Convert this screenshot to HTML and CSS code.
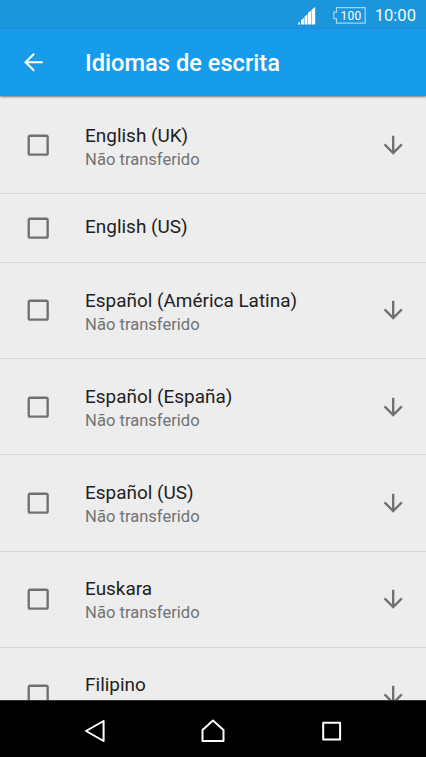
FILE: index.html
```html
<!DOCTYPE html>
<html lang="pt">
<head>
<meta charset="utf-8">
<title>Idiomas de escrita</title>
<link rel="stylesheet" href="styles.css">
</head>
<body>
<svg class="defs" aria-hidden="true">
  <symbol id="box" viewBox="0 0 24 24"><path d="M19 5v14H5V5h14m0-2H5c-1.100 0-2 .9-2 2v14c0 1.100.9 2 2 2h14c1.100 0 2-.9 2-2V5c0-1.100-.9-2-2-2z"/></symbol>
  <symbol id="down" viewBox="0 0 24 24"><path d="M20 12l-1.410-1.410L13 16.170V4h-2v12.170l-5.580-5.590L4 12l8 8 8-8z"/></symbol>
</svg>
<div class="screen">
  <div class="status">
    <svg class="signal" viewBox="0 0 18 18"><path d="M0 17.500v-1l2-2v3zM3 17.500v-4.300l2.900-2.500v6.800zM6.500 17.500V9.700L9.500 7.200v10.300zM10 17.500V6l3.400-3v14.500zM13.900 17.500V2.500L17.200 0v17.500z"/></svg>
    <svg class="battery" viewBox="0 0 33 17"><path d="M3.500.7H32.200V16.200H3.500V11.700H.8V5.200H3.500z"/><text x="18" y="13" text-anchor="middle">100</text></svg>
    <span class="clock">10:00</span>
  </div>
  <header class="appbar">
    <svg class="back" viewBox="0 0 24 24"><path d="M20 11.100H7.700l5.700-5.700L12.200 4.200l-7.900 7.800 7.900 7.800 1.200-1.200L7.700 12.900H20z"/></svg>
    <h1>Idiomas de escrita</h1>
  </header>
  <main class="list">
    <div class="row"><svg class="icon"><use href="#box"/></svg><div class="label"><div class="name">English (UK)</div><div class="sub">Não transferido</div></div><svg class="icon"><use href="#down"/></svg></div>
    <div class="row short"><svg class="icon"><use href="#box"/></svg><div class="label"><div class="name">English (US)</div></div></div>
    <div class="row"><svg class="icon"><use href="#box"/></svg><div class="label"><div class="name">Español (América Latina)</div><div class="sub">Não transferido</div></div><svg class="icon"><use href="#down"/></svg></div>
    <div class="row"><svg class="icon"><use href="#box"/></svg><div class="label"><div class="name">Español (España)</div><div class="sub">Não transferido</div></div><svg class="icon"><use href="#down"/></svg></div>
    <div class="row"><svg class="icon"><use href="#box"/></svg><div class="label"><div class="name">Español (US)</div><div class="sub">Não transferido</div></div><svg class="icon"><use href="#down"/></svg></div>
    <div class="row"><svg class="icon"><use href="#box"/></svg><div class="label"><div class="name">Euskara</div><div class="sub">Não transferido</div></div><svg class="icon"><use href="#down"/></svg></div>
    <div class="row"><svg class="icon"><use href="#box"/></svg><div class="label"><div class="name">Filipino</div></div><svg class="icon"><use href="#down"/></svg></div>
  </main>
  <nav class="navbar">
    <svg viewBox="0 0 28 28"><path d="M5 14L22.600 4V24z"/></svg>
    <svg viewBox="0 0 28 28"><path d="M3.500 24V13L14 3.500l10.500 9.500v11z"/></svg>
    <svg viewBox="0 0 28 28"><path d="M5.200 5.800H22.100V22.500H5.200z"/></svg>
  </nav>
</div>
</body>
</html>
```

FILE: styles.css
```css
* { box-sizing: border-box; }
body { margin: 0; font-family: Roboto, sans-serif; background: #ededed; overflow: hidden; }
svg { display: block; flex: none; }
.defs { position: absolute; width: 0; height: 0; }
.screen { width: 426px; height: 757px; display: flex; flex-direction: column; overflow: hidden; }
.status {
  height: 29px; flex: none; display: flex; align-items: center; justify-content: flex-end;
  padding: 2px 10px 0 0; background: #1b95dc; color: #f2faff;
}
.signal { width: 18px; height: 18px; margin-right: 17px; fill: #fff; }
.battery { width: 33px; height: 17px; margin: 0 9px 1px 0; }
.battery path { fill: none; stroke: #a4d5f3; stroke-width: 1.2; }
.battery text { font-size: 12px; fill: #fff; letter-spacing: .2px; }
.clock { font-size: 16.6px; line-height: 20px; }
.appbar {
  height: 67px; flex: none; display: flex; align-items: center; padding: 0 0 0 19px;
  background: #169ceb; color: #fff; z-index: 1;
  box-shadow: 0 1px 2px rgba(0, 0, 0, .5);
}
.back { width: 28.4px; height: 28.4px; fill: #fff; }
.appbar h1 { margin: 1px 0 0 37.6px; font-size: 23.67px; font-weight: 500; line-height: 30px; }
.list { flex: 1; min-height: 0; overflow: hidden; padding-top: 1.8px; background: #ededed; }
.row {
  height: 96.2px; display: flex; align-items: center; padding: 0 19px 0 23.5px;
  border-bottom: 1px solid #d6d6d6;
}
.short { height: 69px; }
.icon { width: 28.4px; height: 28.4px; fill: #717171; }
.label { flex: 1; height: 50px; margin: 4.3px 0 0 33.2px; }
.short .label { height: 25px; margin-top: -2px; }
.name { font-size: 18.93px; line-height: 26px; color: #212121; }
.sub { font-size: 16.57px; line-height: 22px; color: #737373; }
.navbar {
  height: 57px; flex: none; display: flex; justify-content: center; gap: 90.5px;
  padding-top: 16px; background: #000; border-top: 1px solid #303030;
}
.navbar svg { width: 28px; height: 28px; fill: none; stroke: #fff; stroke-width: 2; stroke-linejoin: round; }
```
